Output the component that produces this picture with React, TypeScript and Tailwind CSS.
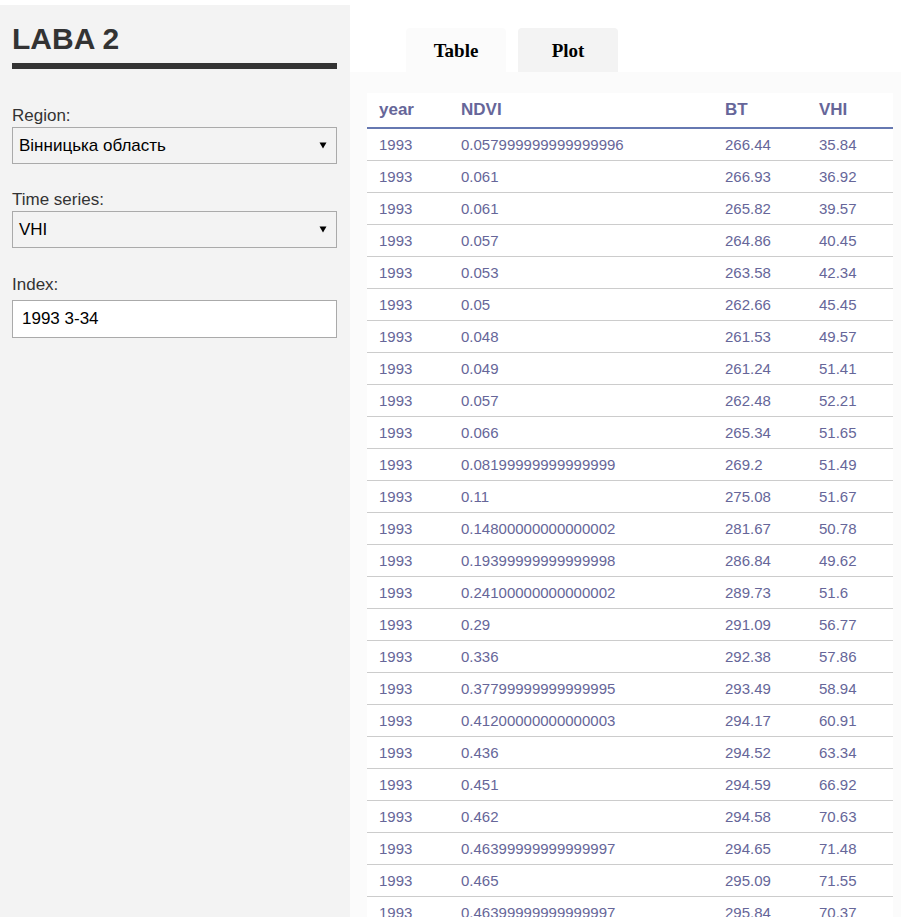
import React from "react";

const rows: [string, string, string, string][] = [
  ["1993", "0.057999999999999996", "266.44", "35.84"],
  ["1993", "0.061", "266.93", "36.92"],
  ["1993", "0.061", "265.82", "39.57"],
  ["1993", "0.057", "264.86", "40.45"],
  ["1993", "0.053", "263.58", "42.34"],
  ["1993", "0.05", "262.66", "45.45"],
  ["1993", "0.048", "261.53", "49.57"],
  ["1993", "0.049", "261.24", "51.41"],
  ["1993", "0.057", "262.48", "52.21"],
  ["1993", "0.066", "265.34", "51.65"],
  ["1993", "0.08199999999999999", "269.2", "51.49"],
  ["1993", "0.11", "275.08", "51.67"],
  ["1993", "0.14800000000000002", "281.67", "50.78"],
  ["1993", "0.19399999999999998", "286.84", "49.62"],
  ["1993", "0.24100000000000002", "289.73", "51.6"],
  ["1993", "0.29", "291.09", "56.77"],
  ["1993", "0.336", "292.38", "57.86"],
  ["1993", "0.37799999999999995", "293.49", "58.94"],
  ["1993", "0.41200000000000003", "294.17", "60.91"],
  ["1993", "0.436", "294.52", "63.34"],
  ["1993", "0.451", "294.59", "66.92"],
  ["1993", "0.462", "294.58", "70.63"],
  ["1993", "0.46399999999999997", "294.65", "71.48"],
  ["1993", "0.465", "295.09", "71.55"],
  ["1993", "0.46399999999999997", "295.84", "70.37"],
];

function Arrow() {
  return (
    <svg width="8" height="7" viewBox="0 0 8 7" className="shrink-0">
      <path d="M0.5 0.5 H7.5 L4 6.5 Z" fill="#000" />
    </svg>
  );
}

function FakeSelect({ value }: { value: string }) {
  return (
    <div className="h-[37px] border border-[#aaaaaa] flex items-center justify-between pl-[6px] pr-[9px] text-[17px] text-black">
      <span>{value}</span>
      <Arrow />
    </div>
  );
}

export default function App() {
  return (
    <div
      className="h-[917px] w-full overflow-hidden bg-white flex"
      style={{ fontFamily: '"Liberation Sans", Arial, sans-serif' }}
    >
      <aside className="w-[350px] shrink-0 mt-[5px] bg-[#f3f3f3] pl-3 pr-[13px] pt-[17px]">
        <h1 className="text-[30px] leading-[34px] font-bold text-[#333333]">LABA 2</h1>
        <div className="mt-[7px] h-[6px] bg-[#333333]" />

        <div className="mt-[37px] text-[17px] leading-[20px] text-[#333333]">Region:</div>
        <div className="mt-[1px]">
          <FakeSelect value="Вінницька область" />
        </div>

        <div className="mt-[26px] text-[17px] leading-[20px] text-[#333333]">Time series:</div>
        <div className="mt-[1px]">
          <FakeSelect value="VHI" />
        </div>

        <div className="mt-[27px] text-[17px] leading-[20px] text-[#333333]">Index:</div>
        <div className="mt-[5px] h-[38px] border border-[#aaaaaa] bg-white flex items-center pl-[9px] text-[17px] text-black">
          1993 3-34
        </div>
      </aside>

      <main className="flex-1 flex flex-col pt-[28px] min-w-0">
        <div className="flex gap-3 pl-[56px]">
          <div
            className="w-[100px] h-[44px] pt-[2px] rounded-t-[4px] bg-[#fbfbfb] flex items-center justify-center text-[19px] font-bold text-black"
            style={{ fontFamily: '"Liberation Serif", "Times New Roman", serif' }}
          >
            Table
          </div>
          <div
            className="w-[100px] h-[44px] pt-[2px] rounded-t-[4px] bg-[#f3f3f3] flex items-center justify-center text-[19px] font-bold text-black"
            style={{ fontFamily: '"Liberation Serif", "Times New Roman", serif' }}
          >
            Plot
          </div>
        </div>
        <div className="flex-1 bg-[#fbfbfb] pl-[17px] pr-[8px] pt-[21px]">
          <table className="w-[526px] bg-white border-collapse text-[#666699]">
            <colgroup>
              <col className="w-[82px]" />
              <col className="w-[264px]" />
              <col className="w-[94px]" />
              <col className="w-[86px]" />
            </colgroup>
            <thead>
              <tr className="h-[35px] border-b-2 border-[#6678b1]">
                <th className="text-left pl-3 text-[17px] font-bold align-middle">year</th>
                <th className="text-left pl-3 text-[17px] font-bold align-middle">NDVI</th>
                <th className="text-left pl-3 text-[17px] font-bold align-middle">BT</th>
                <th className="text-left pl-3 text-[17px] font-bold align-middle">VHI</th>
              </tr>
            </thead>
            <tbody>
              {rows.map((r, i) => (
                <tr key={i} className="h-[32px] border-b border-[#cccccc]">
                  {r.map((c, j) => (
                    <td key={j} className="pl-3 pt-[2px] text-[15px] align-middle">
                      {c}
                    </td>
                  ))}
                </tr>
              ))}
            </tbody>
          </table>
        </div>
      </main>
    </div>
  );
}
